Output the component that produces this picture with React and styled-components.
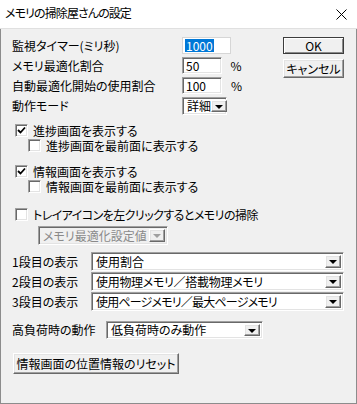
import React from 'react';
import styled, { createGlobalStyle, css } from 'styled-components';

const Global = createGlobalStyle`
  html, body { margin: 0; padding: 0; background: #f0f0f0; }
  body {
    font-family: "Noto Sans CJK JP", "Liberation Sans", sans-serif;
    font-size: 12px;
    color: #000;
    font-feature-settings: "palt";
  }
`;

const Window = styled.div`
  width: 357px;
  height: 404px;
  display: flex;
  flex-direction: column;
  background: #f0f0f0;
`;

const TitleBar = styled.div`
  height: 28px;
  flex: none;
  background: #fff;
  display: flex;
  align-items: center;
  justify-content: space-between;
  padding: 0 10px 0 5px;
  border-bottom: 1px solid #e0e0e0;
`;

const TitleText = styled.span`
  font-size: 12px;
  line-height: 14px;
  letter-spacing: -0.9px;
  padding-bottom: 2px;
`;

const Body = styled.div`
  flex: 1;
  border: 1px solid #8c8c8c;
  border-top: none;
  padding: 8px 12px 0 11px;
  display: flex;
  flex-direction: column;
`;

const sunken = css`
  box-sizing: border-box;
  border: 1px solid;
  border-color: #a0a0a0 #fff #fff #a0a0a0;
  box-shadow: inset 1px 1px 0 #696969, inset -1px -1px 0 #e3e3e3;
`;

const raised = css`
  box-sizing: border-box;
  border: 1px solid;
  border-color: #fff #696969 #696969 #fff;
  box-shadow: inset -1px -1px 0 #a0a0a0, inset 1px 1px 0 #e3e3e3;
  background: #f0f0f0;
`;

const Top = styled.div`
  display: flex;
  justify-content: space-between;
  align-items: flex-start;
`;

const Fields = styled.div`
  display: flex;
  flex-direction: column;
  gap: 3px;
`;

const FieldRow = styled.div`
  display: grid;
  grid-template-columns: 170px auto auto;
  align-items: center;
  height: 17px;
`;

const Label = styled.span`
  line-height: 14px;
  white-space: nowrap;
  letter-spacing: ${p => p.$ls || 0}px;
`;

const EditBox = styled.div`
  ${sunken}
  width: ${p => p.$w}px;
  height: ${p => p.$h || 17}px;
  background: #fff;
  padding: 1px 3px;
  display: flex;
  align-items: center;
  line-height: 13px;
  ${p => p.$light && css`
    border-color: #d6d6d6;
    box-shadow: none;
  `}
`;

const Selected = styled.span`
  background: #0078d7;
  color: #fff;
  padding: 0 1px;
  margin-left: -1px;
`;

const Suffix = styled.span`
  margin-left: ${p => p.$ml}px;
  font-size: 12px;
`;

const Buttons = styled.div`
  display: flex;
  flex-direction: column;
  gap: 5px;
`;

const Button = styled.div`
  ${raised}
  width: ${p => p.$w}px;
  height: ${p => p.$h}px;
  display: flex;
  align-items: center;
  justify-content: center;
  line-height: 14px;
  white-space: nowrap;
  ${p => p.$default && css`
    border-color: #3c3c3c;
    box-shadow: inset 1px 1px 0 #fff, inset -1px -1px 0 #8a8a8a;
  `}
`;

const Combo = styled.div`
  ${sunken}
  width: ${p => p.$w}px;
  height: ${p => p.$h || 19}px;
  background: ${p => (p.$disabled ? '#f0f0f0' : '#fff')};
  color: ${p => (p.$disabled ? '#8a8a8a' : '#000')};
  display: flex;
  align-items: center;
  justify-content: space-between;
  padding: 2px 2px 2px 4px;
  line-height: 14px;
  white-space: nowrap;
  flex: none;
`;

const ComboText = styled.span`
  letter-spacing: ${p => p.$ls || 0}px;
`;

const ArrowBtn = styled.div`
  ${raised}
  width: 16px;
  height: 100%;
  display: flex;
  align-items: center;
  justify-content: center;
  flex: none;
  &::after {
    content: "";
    border-left: 4px solid transparent;
    border-right: 4px solid transparent;
    border-top: 4px solid ${p => (p.$disabled ? '#a0a0a0' : '#000')};
    margin-top: 1px;
  }
`;

const Checks = styled.div`
  display: flex;
  flex-direction: column;
  margin-top: 9px;
`;

const Group = styled.div`
  display: flex;
  flex-direction: column;
  margin-bottom: ${p => p.$mb || 0}px;
`;

const CheckRow = styled.div`
  display: flex;
  align-items: center;
  gap: 5px;
  height: 15px;
  padding-left: ${p => (p.$indent ? 16 : 3)}px;
`;

const Box = styled.div`
  ${sunken}
  width: 13px;
  height: 13px;
  background: #fff;
  flex: none;
  display: flex;
  align-items: center;
  justify-content: center;
`;

const Indented = styled.div`
  padding-left: 26px;
  margin-top: 4px;
`;

const Rows = styled.div`
  display: flex;
  flex-direction: column;
  gap: 1px;
  margin-top: 7px;
`;

const SelectRow = styled.div`
  display: flex;
  align-items: center;
  height: ${p => p.$h || 19}px;
  margin-top: ${p => p.$mt || 0}px;
`;

const RowLabel = styled.span`
  width: ${p => p.$w}px;
  flex: none;
  line-height: 14px;
  white-space: nowrap;
`;

const Footer = styled.div`
  margin-top: 14px;
  padding-left: 1px;
`;

const Check = () => (
  <svg width="9" height="9" viewBox="0 0 9 9">
    <path d="M1 4 L3.5 6.5 L8 1.5" fill="none" stroke="#000" strokeWidth="1.8" />
  </svg>
);

const CheckBox = ({ checked, indent, ls, children }) => (
  <CheckRow $indent={indent}>
    <Box>{checked && <Check />}</Box>
    <Label $ls={ls}>{children}</Label>
  </CheckRow>
);

const Select = ({ w, h, disabled, ls, children }) => (
  <Combo $w={w} $h={h} $disabled={disabled}>
    <ComboText $ls={ls}>{children}</ComboText>
    <ArrowBtn $disabled={disabled} />
  </Combo>
);

export default function App() {
  return (
    <>
      <Global />
      <Window>
        <TitleBar>
          <TitleText>メモリの掃除屋さんの設定</TitleText>
          <svg width="11" height="11" viewBox="0 0 11 11">
            <path d="M0.5 0.5 L10.5 10.5 M10.5 0.5 L0.5 10.5" stroke="#000" strokeWidth="1" />
          </svg>
        </TitleBar>
        <Body>
          <Top>
            <Fields>
              <FieldRow>
                <Label>監視タイマー(ミリ秒)</Label>
                <EditBox $w={49} $light>
                  <Selected>1000</Selected>
                </EditBox>
              </FieldRow>
              <FieldRow>
                <Label>メモリ最適化割合</Label>
                <EditBox $w={40}>50</EditBox>
                <Suffix $ml={8}>%</Suffix>
              </FieldRow>
              <FieldRow>
                <Label>自動最適化開始の使用割合</Label>
                <EditBox $w={40}>100</EditBox>
                <Suffix $ml={9}>%</Suffix>
              </FieldRow>
              <FieldRow>
                <Label>動作モード</Label>
                <Select w={45} h={18}>詳細</Select>
              </FieldRow>
            </Fields>
            <Buttons>
              <Button $w={61} $h={17} $default>OK</Button>
              <Button $w={61} $h={19}>キャンセル</Button>
            </Buttons>
          </Top>

          <Checks>
            <Group $mb={11}>
              <CheckBox checked>進捗画面を表示する</CheckBox>
              <CheckBox indent>進捗画面を最前面に表示する</CheckBox>
            </Group>
            <Group $mb={13}>
              <CheckBox checked>情報画面を表示する</CheckBox>
              <CheckBox indent>情報画面を最前面に表示する</CheckBox>
            </Group>
            <Group>
              <CheckBox ls={-0.55}>トレイアイコンを左クリックするとメモリの掃除</CheckBox>
              <Indented>
                <Select w={130} h={19} disabled>メモリ最適化設定値</Select>
              </Indented>
            </Group>
          </Checks>

          <Rows>
            <SelectRow>
              <RowLabel $w={79}>1段目の表示</RowLabel>
              <Select w={253}>使用割合</Select>
            </SelectRow>
            <SelectRow>
              <RowLabel $w={79}>2段目の表示</RowLabel>
              <Select w={253} ls={-0.3}>使用物理メモリ／搭載物理メモリ</Select>
            </SelectRow>
            <SelectRow>
              <RowLabel $w={79}>3段目の表示</RowLabel>
              <Select w={253} ls={-0.8}>使用ページメモリ／最大ページメモリ</Select>
            </SelectRow>
            <SelectRow $h={18} $mt={9}>
              <RowLabel $w={94}>高負荷時の動作</RowLabel>
              <Select w={157} h={18}>低負荷時のみ動作</Select>
            </SelectRow>
          </Rows>

          <Footer>
            <Button $w={166} $h={21}>情報画面の位置情報のリセット</Button>
          </Footer>
        </Body>
      </Window>
    </>
  );
}
